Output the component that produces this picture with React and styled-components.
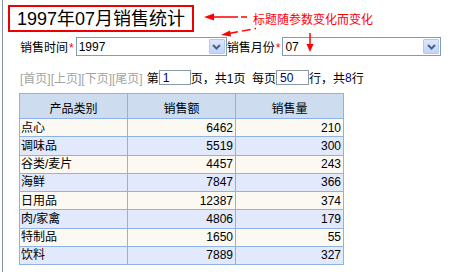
import React from "react";
import styled, { createGlobalStyle } from "styled-components";

const GlobalStyle = createGlobalStyle`
  html, body { margin: 0; padding: 0; background: #ffffff; }
  body {
    font-family: "Liberation Sans", "Noto Sans CJK SC", sans-serif;
    font-size: 12px;
    color: #000;
  }
`;

const Page = styled.div`
  position: relative;
  box-sizing: border-box;
  margin-left: 2px;
  height: 272px;
  border-left: 1px solid #8091a8;
  padding: 5px 0 0 5px;
`;

const TitleBox = styled.div`
  box-sizing: border-box;
  display: flex;
  align-items: center;
  width: 186px;
  height: 27px;
  border: 2px solid #ee0000;
  padding-left: 7px;
  font-size: 18px;
  line-height: 1;
  white-space: nowrap;
`;

const FormRow = styled.div`
  display: flex;
  align-items: center;
  height: 19px;
  margin: 5px 0 0 12px;
`;

const Label = styled.span`
  font-size: 12px;
  white-space: nowrap;
  margin-right: ${(p) => p.$gap || 2}px;
`;

const Star = styled.span`
  color: #ff0000;
  margin-left: 1px;
`;

const SelectBox = styled.div`
  box-sizing: border-box;
  display: flex;
  align-items: center;
  justify-content: space-between;
  width: ${(p) => p.$w}px;
  height: 19px;
  border: 1px solid #7f9db9;
  background: #fff;
  padding: 1px;
  font-size: 12px;
`;

const SelectText = styled.span`
  padding-left: 1px;
`;

const DropButton = styled.div`
  box-sizing: border-box;
  width: 16px;
  height: 15px;
  display: flex;
  align-items: center;
  justify-content: center;
  border: 1px solid #b5c8f2;
  border-radius: 1px;
  background: linear-gradient(#dce7fd, #c2d4fa);
`;

const PagerRow = styled.div`
  display: flex;
  align-items: center;
  height: 15px;
  margin: 14px 0 0 12px;
  white-space: nowrap;
`;

const PagerLinks = styled.span`
  color: #a3a3a3;
  margin-right: 4px;
`;

const PageInput = styled.div`
  box-sizing: border-box;
  width: ${(p) => p.$w}px;
  height: 15px;
  border: 1px solid #8c9aa8;
  color: #000080;
  padding: 1px 0 0 3px;
  line-height: 13px;
  font-size: 12px;
`;

const BlueNum = styled.span`
  color: #000080;
`;

const Table = styled.table`
  border-collapse: collapse;
  margin: 8px 0 0 11px;
  font-size: 12px;
  table-layout: fixed;
`;

const Th = styled.th`
  box-sizing: border-box;
  width: 108px;
  height: 25px;
  background: #cedcef;
  border: 1px solid #8db2e3;
  font-weight: normal;
  text-align: center;
  padding: 2px 0 0 0;
`;

const Tr = styled.tr`
  height: 18.25px;
  background: ${(p) => (p.$alt ? "#e3e9fc" : "#fbf9f2")};
`;

const Td = styled.td`
  border: 1px solid #8db2e3;
  padding: 0 ${(p) => (p.$num ? "2px" : "0")} 0 ${(p) => (p.$num ? "0" : "1px")};
  text-align: ${(p) => (p.$num ? "right" : "left")};
  line-height: 14px;
`;

const Overlay = styled.svg`
  position: absolute;
  left: -3px;
  top: 0;
  pointer-events: none;
`;

const Note = styled.span`
  position: absolute;
  left: 250px;
  top: 10px;
  color: #ff0000;
  font-size: 12px;
  white-space: nowrap;
`;

const Chevron = () => (
  <svg width="9" height="6" viewBox="0 0 9 6">
    <path d="M1 1 L4.5 4.5 L8 1" fill="none" stroke="#4d6185" strokeWidth="2" />
  </svg>
);

const rows = [
  ["点心", 6462, 210],
  ["调味品", 5519, 300],
  ["谷类/麦片", 4457, 243],
  ["海鲜", 7847, 366],
  ["日用品", 12387, 374],
  ["肉/家禽", 4806, 179],
  ["特制品", 1650, 55],
  ["饮料", 7889, 327],
];

export default function App() {
  return (
    <>
      <GlobalStyle />
      <Page>
        <TitleBox>1997年07月销售统计</TitleBox>
        <FormRow>
          <Label>
            销售时间<Star>*</Star>
          </Label>
          <SelectBox $w={151}>
            <SelectText>1997</SelectText>
            <DropButton>
              <Chevron />
            </DropButton>
          </SelectBox>
          <Label>
            销售月份<Star>*</Star>
          </Label>
          <SelectBox $w={159}>
            <SelectText>07</SelectText>
            <DropButton>
              <Chevron />
            </DropButton>
          </SelectBox>
        </FormRow>
        <PagerRow>
          <PagerLinks>[首页][上页][下页][尾页]</PagerLinks>
          第
          <PageInput $w={32}>1</PageInput>
          页，共1页&nbsp;&nbsp;每页
          <PageInput $w={33}>50</PageInput>
          行，共<BlueNum>8</BlueNum>行
        </PagerRow>
        <Table>
          <thead>
            <tr>
              <Th>产品类别</Th>
              <Th>销售额</Th>
              <Th>销售量</Th>
            </tr>
          </thead>
          <tbody>
            {rows.map((r, i) => (
              <Tr key={r[0]} $alt={i % 2 === 1}>
                <Td>{r[0]}</Td>
                <Td $num>{r[1]}</Td>
                <Td $num>{r[2]}</Td>
              </Tr>
            ))}
          </tbody>
        </Table>
        <Note>标题随参数变化而变化</Note>
        <Overlay width="454" height="272" viewBox="0 0 454 272">
          <line x1="212" y1="17" x2="247" y2="17" stroke="#ff0000" strokeWidth="1.5" strokeDasharray="26 3" />
          <polygon points="204,17 214,13.5 214,20.5" fill="#ff0000" />
          <line x1="229" y1="33.5" x2="256" y2="28.5" stroke="#ff0000" strokeWidth="1.5" strokeDasharray="9 4" />
          <polygon points="221,35 230,30.5 231,36.5" fill="#ff0000" />
          <line x1="310" y1="33" x2="310" y2="45" stroke="#ff0000" strokeWidth="1.5" />
          <polygon points="306.5,44 313.5,44 310,52" fill="#ff0000" />
        </Overlay>
      </Page>
    </>
  );
}
